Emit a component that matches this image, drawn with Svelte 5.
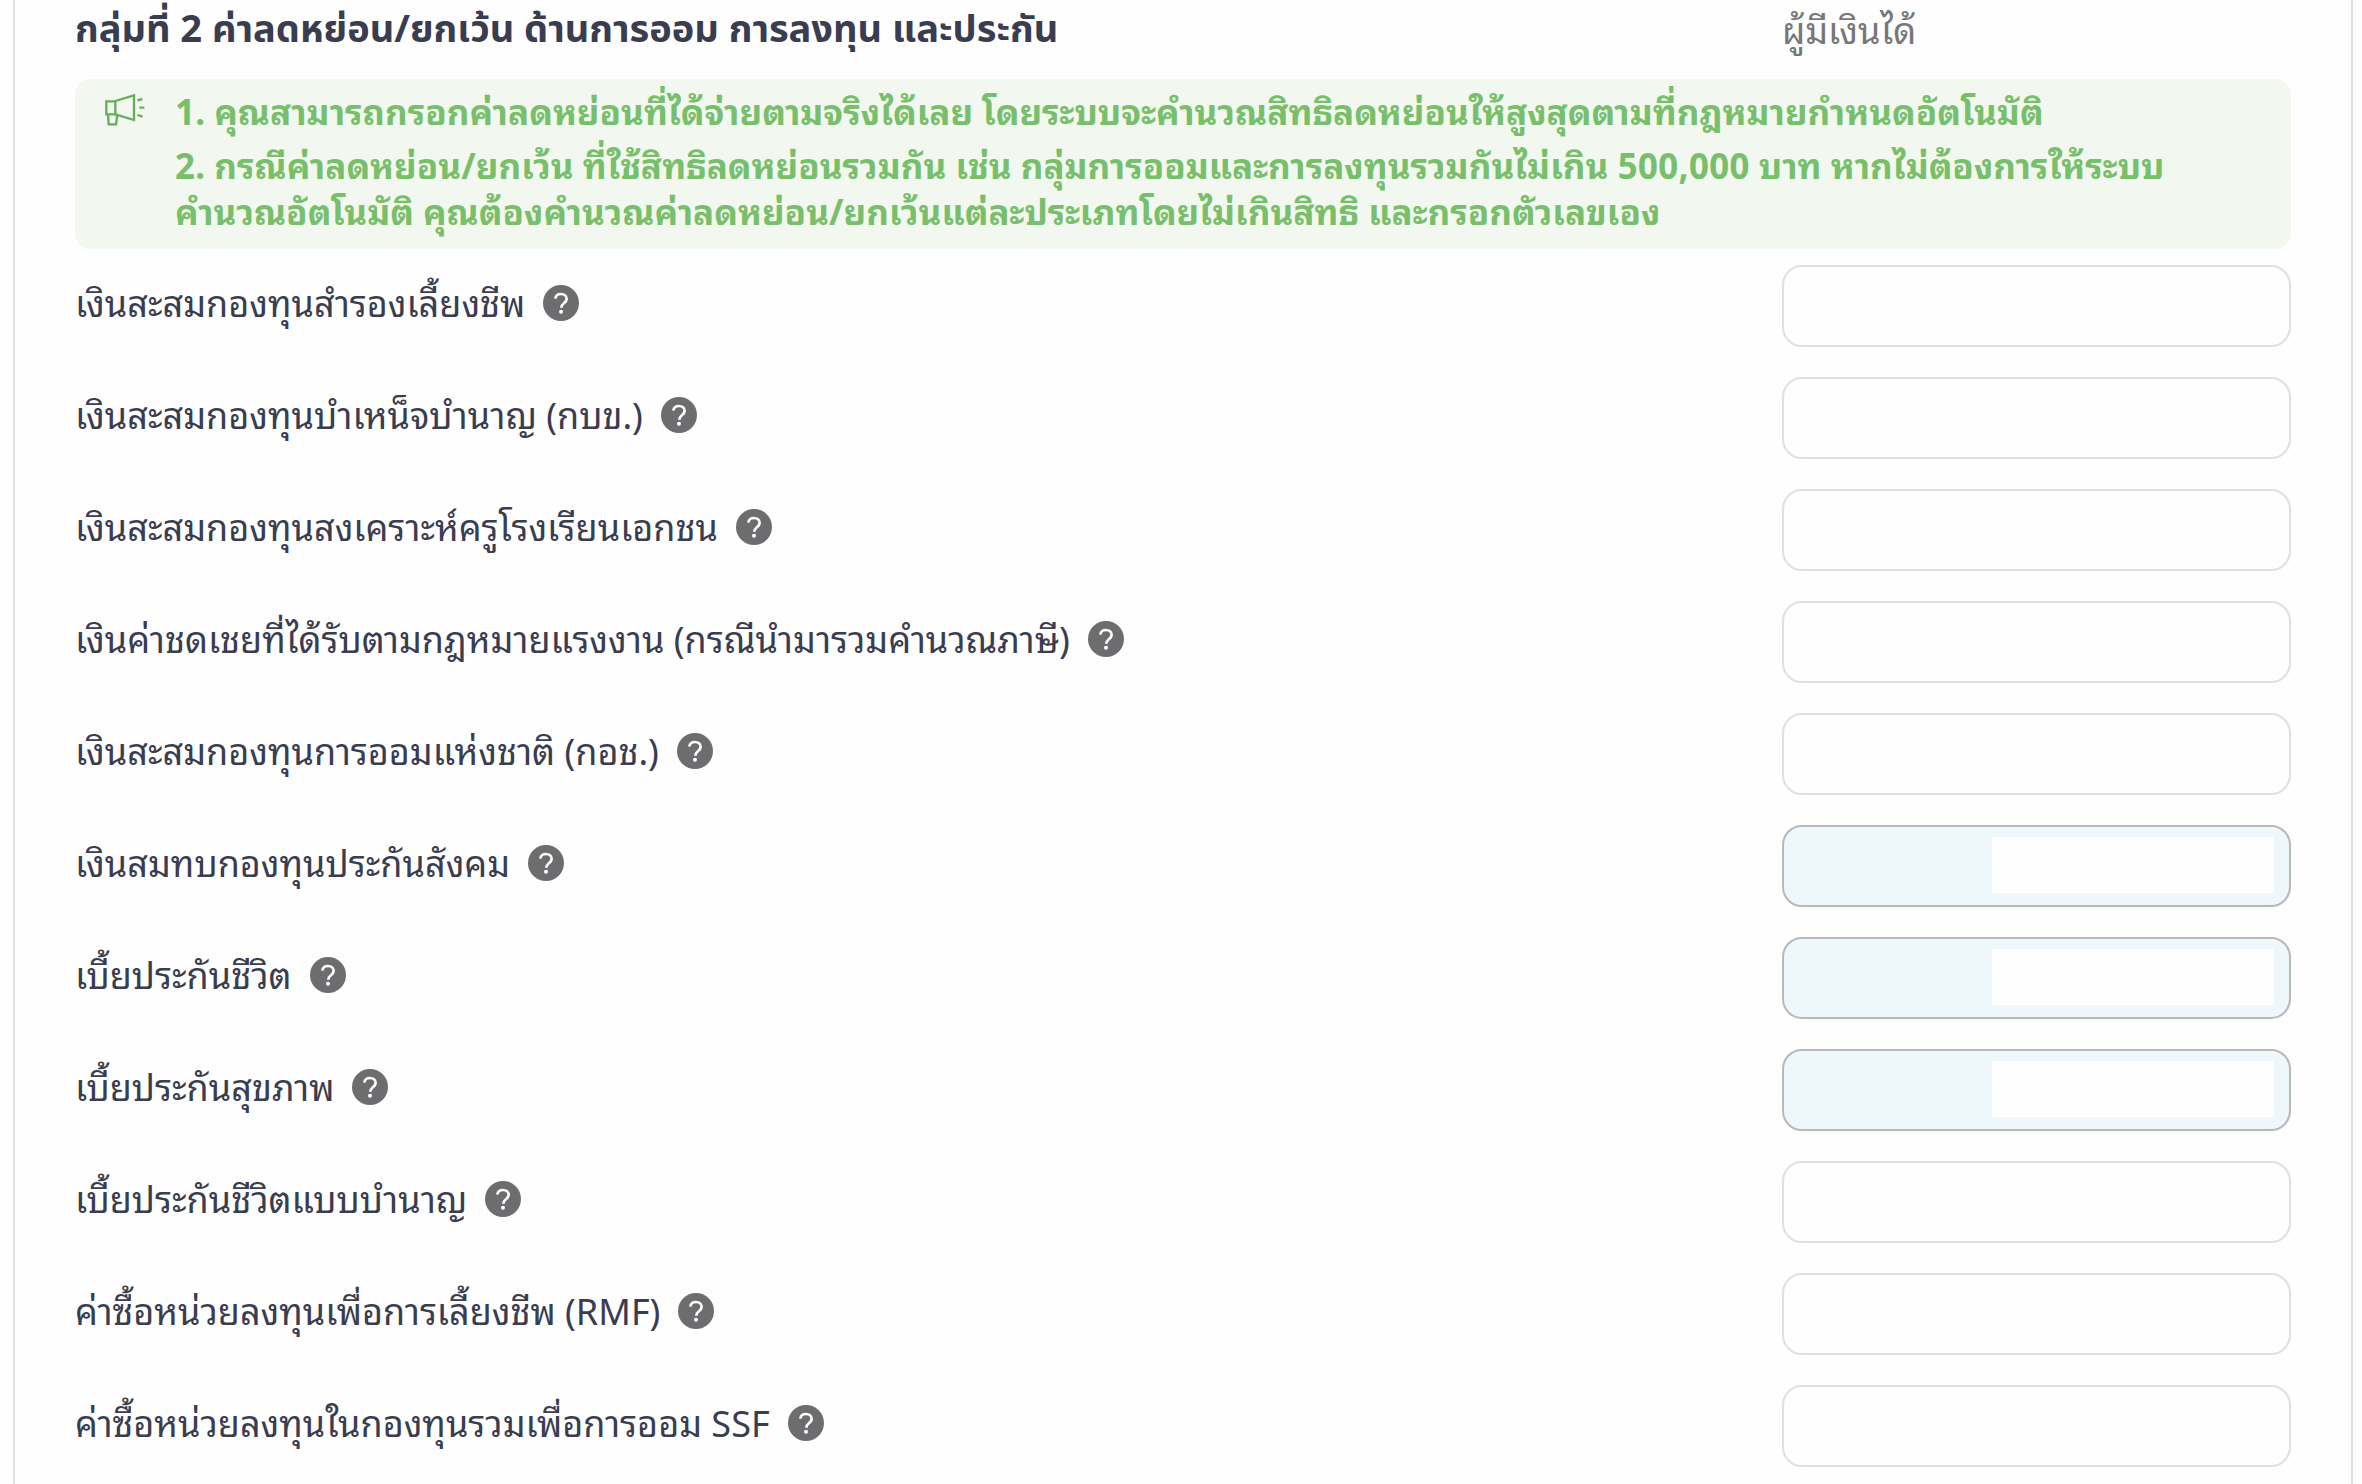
<script lang="ts">
	const fields = $state([
		{ id: 'pvd', label: 'เงินสะสมกองทุนสำรองเลี้ยงชีพ', masked: false, value: '' },
		{ id: 'gpf', label: 'เงินสะสมกองทุนบำเหน็จบำนาญ (กบข.)', masked: false, value: '' },
		{ id: 'teacher', label: 'เงินสะสมกองทุนสงเคราะห์ครูโรงเรียนเอกชน', masked: false, value: '' },
		{ id: 'severance', label: 'เงินค่าชดเชยที่ได้รับตามกฎหมายแรงงาน (กรณีนำมารวมคำนวณภาษี)', masked: false, value: '' },
		{ id: 'nsf', label: 'เงินสะสมกองทุนการออมแห่งชาติ (กอช.)', masked: false, value: '' },
		{ id: 'sso', label: 'เงินสมทบกองทุนประกันสังคม', masked: true, value: '' },
		{ id: 'life', label: 'เบี้ยประกันชีวิต', masked: true, value: '' },
		{ id: 'health', label: 'เบี้ยประกันสุขภาพ', masked: true, value: '' },
		{ id: 'pension', label: 'เบี้ยประกันชีวิตแบบบำนาญ', masked: false, value: '' },
		{ id: 'rmf', label: 'ค่าซื้อหน่วยลงทุนเพื่อการเลี้ยงชีพ (RMF)', masked: false, value: '' },
		{ id: 'ssf', label: 'ค่าซื้อหน่วยลงทุนในกองทุนรวมเพื่อการออม SSF', masked: false, value: '' }
	]);
</script>

<main class="card">
	<header class="columns head">
		<h2>กลุ่มที่ 2 ค่าลดหย่อน/ยกเว้น ด้านการออม การลงทุน และประกัน</h2>
		<span class="owner">ผู้มีเงินได้</span>
	</header>

	<section class="notice">
		<svg class="megaphone" viewBox="75 40 120 99" fill="none" stroke="currentColor" stroke-width="7" aria-hidden="true">
			<path d="M79 65h27v39H79z"></path>
			<path d="M106 64l56-17v74l-56-17"></path>
			<path d="M84 104l2 30h22l4-28"></path>
			<path d="M172 62l15-4M178 84h15M172 106l16 5"></path>
		</svg>
		<div class="notice-text">
			<p>1. คุณสามารถกรอกค่าลดหย่อนที่ได้จ่ายตามจริงได้เลย โดยระบบจะคำนวณสิทธิลดหย่อนให้สูงสุดตามที่กฎหมายกำหนดอัตโนมัติ</p>
			<p>2. กรณีค่าลดหย่อน/ยกเว้น ที่ใช้สิทธิลดหย่อนรวมกัน เช่น กลุ่มการออมและการลงทุนรวมกันไม่เกิน 500,000 บาท หากไม่ต้องการให้ระบบคำนวณอัตโนมัติ คุณต้องคำนวณค่าลดหย่อน/ยกเว้นแต่ละประเภทโดยไม่เกินสิทธิ และกรอกตัวเลขเอง</p>
		</div>
	</section>

	<form class="fields">
		{#each fields as field (field.id)}
			<div class="columns">
				<div class="label">
					<label for={field.id}>{field.label}</label>
					<button type="button" class="help" aria-label="คำอธิบาย">
						<svg viewBox="0 0 108 108" fill="none" aria-hidden="true">
							<circle cx="54" cy="54" r="54" fill="#6d6d6f"></circle>
							<path d="M37 41c1-9 8-14 17-14s17 6 17 15c0 12-16 12-16 26" stroke="#fff" stroke-width="8"></path>
							<circle cx="54" cy="80" r="6" fill="#fff"></circle>
						</svg>
					</button>
				</div>
				<input id={field.id} type="text" inputmode="decimal" class:masked={field.masked} bind:value={field.value} />
			</div>
		{/each}
	</form>
</main>

<style>
	:global(body) {
		background: #fefefe;
	}

	.card {
		margin: 0 9px 0 13px;
		padding: 0 60px 18px;
		border: solid #e0e0e0;
		border-width: 0 2px;
		font-family: 'Noto Sans Thai Looped', 'Noto Sans Thai', 'Noto Sans', sans-serif;
		font-size: 36px;
		line-height: 48px;
		color: #3a3c50;
	}

	.columns {
		display: grid;
		grid-template-columns: 1fr minmax(0, 509px);
	}

	.head {
		height: 79px;
		padding-top: 4px;
		box-sizing: border-box;
	}

	h2 {
		margin: 0;
		font-family: 'Noto Sans Thai', 'Noto Sans', sans-serif;
		font-size: 38px;
		line-height: 54px;
		font-weight: 700;
	}

	.owner {
		color: #777;
	}

	.notice {
		display: flex;
		gap: 30px;
		padding: 7px 80px 17px 30px;
		border-radius: 16px;
		background: #f2f7f0;
		color: #78bf6b;
		font-size: 35px;
		font-weight: 700;
		line-height: 46px;
	}

	.megaphone {
		flex: none;
		width: 40px;
		height: 33px;
		margin-top: 7px;
		color: #68ad5e;
	}

	.notice-text {
		display: flex;
		flex-direction: column;
		gap: 8px;
	}

	p {
		margin: 0;
	}

	.fields {
		display: flex;
		flex-direction: column;
		gap: 30px;
		margin-top: 16px;
	}

	.label {
		display: flex;
		align-items: center;
		gap: 18px;
		height: 76px;
	}

	label {
		padding-bottom: 4px;
	}

	.help {
		width: 36px;
		height: 36px;
		padding: 0;
		border: 0;
		background: none;
		cursor: pointer;
	}

	.help svg {
		display: block;
	}

	input {
		width: 100%;
		height: 82px;
		box-sizing: border-box;
		padding: 0 20px;
		border: 2px solid #e0e0e0;
		border-radius: 20px;
		background: #fefefe;
		color: inherit;
		font: inherit;
		text-align: right;
	}

	input.masked {
		border-color: #b8b8b8;
		background: linear-gradient(#fefefe, #fefefe) right 15px top 10px / 282px 56px no-repeat, #eef8fb;
	}
</style>
